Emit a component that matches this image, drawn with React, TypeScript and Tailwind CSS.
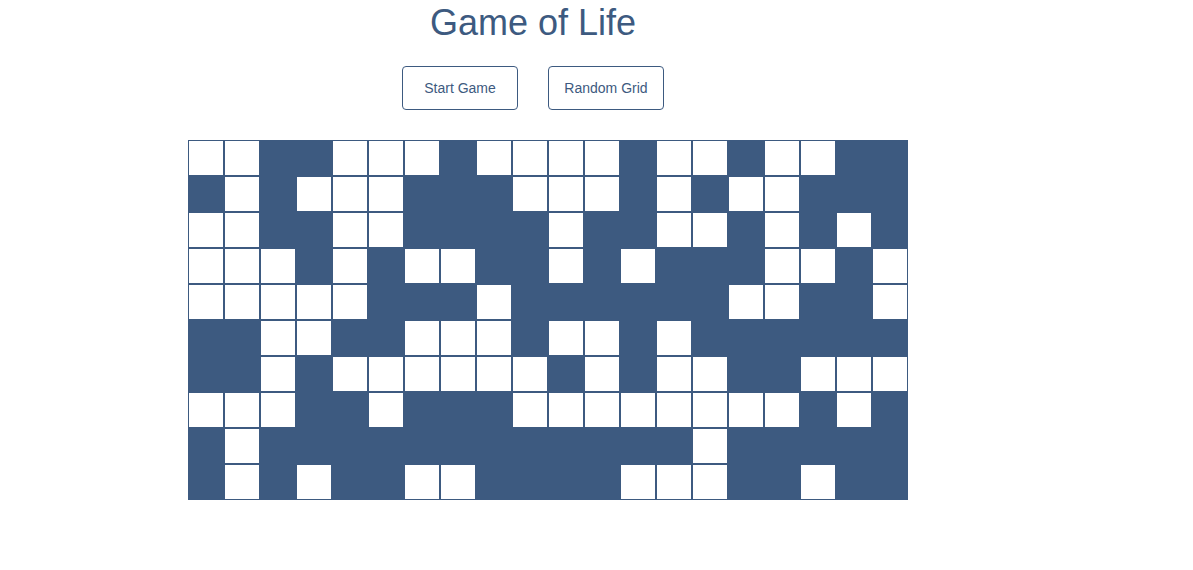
const rows = [
  "00110001000010010011",
  "10100011100010100111",
  "00110011110110010101",
  "00010100110101110010",
  "00000111011111100110",
  "11001100010010111111",
  "11010000001010011000",
  "00011011100000000101",
  "10111111111111011111",
  "10101100111100011011",
]

export default function App() {
  return (
    <main className="min-h-[570px] w-[1193px] bg-white font-['Liberation_Sans',Arial,sans-serif] text-[#3d5a80]">
      <div className="w-[1066px] pt-[2px]">
        <h1 className="text-center text-[36px] leading-[41px]">Game of Life</h1>
        <div className="mt-[23px] flex justify-center gap-[30px]">
          <button className="h-[44px] w-[116px] rounded-[4px] border border-[#3d5a80] bg-white text-[14px]">
            Start Game
          </button>
          <button className="h-[44px] w-[116px] rounded-[4px] border border-[#3d5a80] bg-white text-[14px]">
            Random Grid
          </button>
        </div>
      </div>
      <div className="ml-[188px] mt-[30px] grid w-[720px] grid-cols-[repeat(20,36px)]">
        {rows.map((row, r) =>
          row.split("").map((v, c) => (
            <div
              key={`${r}-${c}`}
              className={
                v === "1"
                  ? "h-[36px] w-[36px] border border-[#3d5a80] bg-[#3d5a80]"
                  : "h-[36px] w-[36px] border border-[#3d5a80] bg-white"
              }
            />
          ))
        )}
      </div>
    </main>
  )
}
